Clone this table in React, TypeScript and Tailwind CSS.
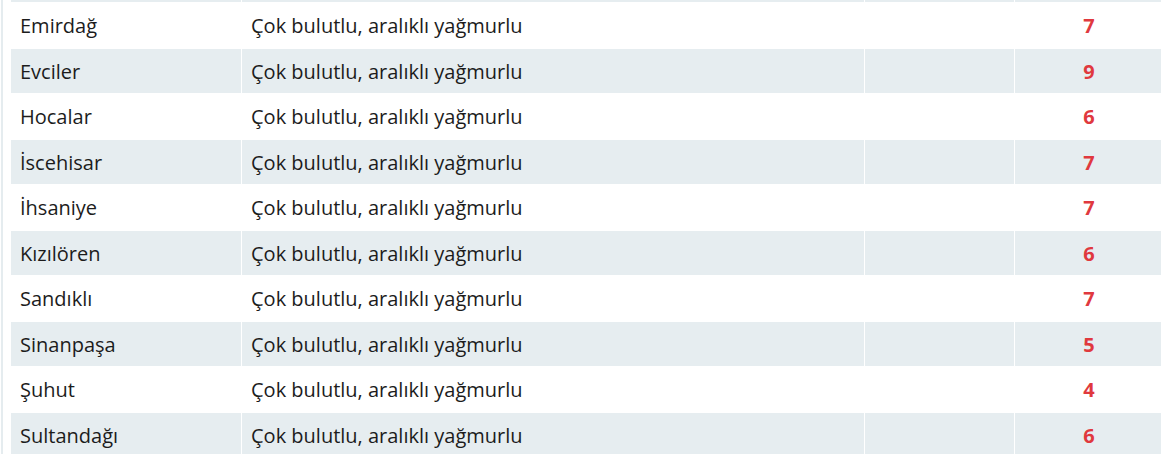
import React from "react";

const rows: [string, number][] = [
  ["Emirdağ", 7],
  ["Evciler", 9],
  ["Hocalar", 6],
  ["İscehisar", 7],
  ["İhsaniye", 7],
  ["Kızılören", 6],
  ["Sandıklı", 7],
  ["Sinanpaşa", 5],
  ["Şuhut", 4],
  ["Sultandağı", 6],
];

function Row({ name, val, grey, h }: { name: string; val: number | null; grey: boolean; h: string }) {
  const bg = grey ? "bg-[#e6edf0]" : "bg-white";
  return (
    <div className={`grid grid-cols-[230px_1px_622px_1px_149px_1px_1fr] ${h}`}>
      <div className={`${bg} flex items-center pl-[9px] pt-[2px] text-[20px] text-[#1c1c1c]`}>{name}</div>
      <div className="bg-white" />
      <div className={`${bg} flex items-center pl-[9px] pt-[2px] text-[20px] text-[#1c1c1c]`}>
        {val !== null ? "Çok bulutlu, aralıklı yağmurlu" : ""}
      </div>
      <div className="bg-white" />
      <div className={bg} />
      <div className="bg-white" />
      <div className={`${bg} flex items-center justify-center pt-[2px] text-[20px] font-bold text-[#e0393e] pl-[2px]`}>
        {val !== null ? val : ""}
      </div>
    </div>
  );
}

export default function App() {
  return (
    <div
      className="w-[1161px] h-[454px] overflow-hidden bg-white flex"
      style={{ fontFamily: '"Open Sans", "Noto Sans", sans-serif' }}
    >
      <div className="w-px bg-white" />
      <div className="w-[2px] bg-[#e5ecef]" />
      <div className="w-[8px] bg-white" />
      <div className="flex-1 flex flex-col">
        <Row name="" val={null} grey={true} h="h-[2px]" />
        {rows.map(([n, v], i) => (
          <div key={n} className="flex flex-col">
            <div className="h-px bg-white" />
            <Row name={n} val={v} grey={i % 2 === 1} h="h-[44.5px]" />
          </div>
        ))}
      </div>
    </div>
  );
}
